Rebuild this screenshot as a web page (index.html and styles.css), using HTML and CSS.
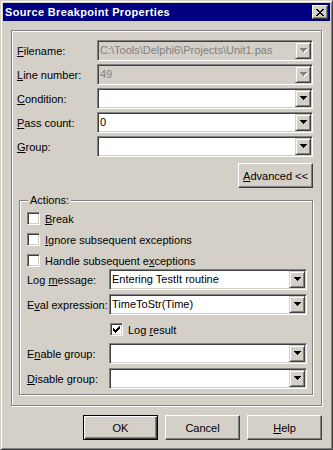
FILE: index.html
```html
<!DOCTYPE html>
<html lang="en">
<head>
    <meta charset="utf-8">
    <title>Source Breakpoint Properties</title>
    <link rel="stylesheet" href="styles.css">
</head>
<body>
    <div class="window">

        <!-- title bar -->
        <div class="titlebar">
            <span class="title">Source Breakpoint Properties</span>
            <span class="close-btn">
                <svg width="8" height="7" viewBox="0 0 8 7" shape-rendering="crispEdges">
                    <rect x="0" y="0" width="2" height="1"/><rect x="6" y="0" width="2" height="1"/>
                    <rect x="1" y="1" width="2" height="1"/><rect x="5" y="1" width="2" height="1"/>
                    <rect x="2" y="2" width="4" height="1"/>
                    <rect x="3" y="3" width="2" height="1"/>
                    <rect x="2" y="4" width="4" height="1"/>
                    <rect x="1" y="5" width="2" height="1"/><rect x="5" y="5" width="2" height="1"/>
                    <rect x="0" y="6" width="2" height="1"/><rect x="6" y="6" width="2" height="1"/>
                </svg>
            </span>
        </div>

        <div class="client">
            <div class="panel">

                <div class="field-row">
                    <span class="lbl"><u>F</u>ilename:</span>
                    <div class="combo disabled">
                        <span class="combo-text">C:\Tools\Delphi6\Projects\Unit1.pas</span>
                        <span class="drop"><svg class="arrow" width="8" height="5" viewBox="0 0 8 5" shape-rendering="crispEdges"><g fill="#fff"><rect x="1" y="1" width="7" height="1"/><rect x="2" y="2" width="5" height="1"/><rect x="3" y="3" width="3" height="1"/><rect x="4" y="4" width="1" height="1"/></g><g fill="#808080"><rect x="0" y="0" width="7" height="1"/><rect x="1" y="1" width="5" height="1"/><rect x="2" y="2" width="3" height="1"/><rect x="3" y="3" width="1" height="1"/></g></svg></span>
                    </div>
                </div>

                <div class="field-row">
                    <span class="lbl"><u>L</u>ine number:</span>
                    <div class="combo disabled">
                        <span class="combo-text">49</span>
                        <span class="drop"><svg class="arrow" width="8" height="5" viewBox="0 0 8 5" shape-rendering="crispEdges"><g fill="#fff"><rect x="1" y="1" width="7" height="1"/><rect x="2" y="2" width="5" height="1"/><rect x="3" y="3" width="3" height="1"/><rect x="4" y="4" width="1" height="1"/></g><g fill="#808080"><rect x="0" y="0" width="7" height="1"/><rect x="1" y="1" width="5" height="1"/><rect x="2" y="2" width="3" height="1"/><rect x="3" y="3" width="1" height="1"/></g></svg></span>
                    </div>
                </div>

                <div class="field-row">
                    <span class="lbl"><u>C</u>ondition:</span>
                    <div class="combo">
                        <span class="combo-text"></span>
                        <span class="drop"><svg class="arrow" width="8" height="5" viewBox="0 0 8 5" shape-rendering="crispEdges"><rect x="0" y="0" width="7" height="1"/><rect x="1" y="1" width="5" height="1"/><rect x="2" y="2" width="3" height="1"/><rect x="3" y="3" width="1" height="1"/></svg></span>
                    </div>
                </div>

                <div class="field-row">
                    <span class="lbl"><u>P</u>ass count:</span>
                    <div class="combo">
                        <span class="combo-text">0</span>
                        <span class="drop"><svg class="arrow" width="8" height="5" viewBox="0 0 8 5" shape-rendering="crispEdges"><rect x="0" y="0" width="7" height="1"/><rect x="1" y="1" width="5" height="1"/><rect x="2" y="2" width="3" height="1"/><rect x="3" y="3" width="1" height="1"/></svg></span>
                    </div>
                </div>

                <div class="field-row">
                    <span class="lbl"><u>G</u>roup:</span>
                    <div class="combo">
                        <span class="combo-text"></span>
                        <span class="drop"><svg class="arrow" width="8" height="5" viewBox="0 0 8 5" shape-rendering="crispEdges"><rect x="0" y="0" width="7" height="1"/><rect x="1" y="1" width="5" height="1"/><rect x="2" y="2" width="3" height="1"/><rect x="3" y="3" width="1" height="1"/></svg></span>
                    </div>
                </div>

                <div class="adv-row">
                    <span class="btn"><u>A</u>dvanced &lt;&lt;</span>
                </div>

                <!-- Actions group -->
                <div class="groupbox">
                    <span class="legend">Actions:</span>

                    <div class="check-row">
                        <span class="check"></span>
                        <span><u>B</u>reak</span>
                    </div>
                    <div class="check-row gap8">
                        <span class="check"></span>
                        <span><u>I</u>gnore subsequent exceptions</span>
                    </div>
                    <div class="check-row gap8">
                        <span class="check"></span>
                        <span>Handle subsequent e<u>x</u>ceptions</span>
                    </div>

                    <div class="sub-row gap2">
                        <span class="sub-lbl">Log <u>m</u>essage:</span>
                        <div class="combo small">
                            <span class="combo-text">Entering TestIt routine</span>
                            <span class="drop"><svg class="arrow" width="8" height="5" viewBox="0 0 8 5" shape-rendering="crispEdges"><rect x="0" y="0" width="7" height="1"/><rect x="1" y="1" width="5" height="1"/><rect x="2" y="2" width="3" height="1"/><rect x="3" y="3" width="1" height="1"/></svg></span>
                        </div>
                    </div>
                    <div class="sub-row gap4">
                        <span class="sub-lbl">E<u>v</u>al expression:</span>
                        <div class="combo small">
                            <span class="combo-text">TimeToStr(Time)</span>
                            <span class="drop"><svg class="arrow" width="8" height="5" viewBox="0 0 8 5" shape-rendering="crispEdges"><rect x="0" y="0" width="7" height="1"/><rect x="1" y="1" width="5" height="1"/><rect x="2" y="2" width="3" height="1"/><rect x="3" y="3" width="1" height="1"/></svg></span>
                        </div>
                    </div>

                    <div class="check-row indent gap8">
                        <span class="check">
                            <svg width="7" height="7" viewBox="0 0 7 7" shape-rendering="crispEdges">
                                <rect x="6" y="0" width="1" height="3"/>
                                <rect x="5" y="1" width="1" height="3"/>
                                <rect x="4" y="2" width="1" height="3"/>
                                <rect x="3" y="3" width="1" height="3"/>
                                <rect x="2" y="4" width="1" height="3"/>
                                <rect x="1" y="3" width="1" height="3"/>
                                <rect x="0" y="2" width="1" height="3"/>
                            </svg>
                        </span>
                        <span>Log <u>r</u>esult</span>
                    </div>

                    <div class="sub-row gap7">
                        <span class="sub-lbl">E<u>n</u>able group:</span>
                        <div class="combo small">
                            <span class="combo-text"></span>
                            <span class="drop"><svg class="arrow" width="8" height="5" viewBox="0 0 8 5" shape-rendering="crispEdges"><rect x="0" y="0" width="7" height="1"/><rect x="1" y="1" width="5" height="1"/><rect x="2" y="2" width="3" height="1"/><rect x="3" y="3" width="1" height="1"/></svg></span>
                        </div>
                    </div>
                    <div class="sub-row gap4">
                        <span class="sub-lbl"><u>D</u>isable group:</span>
                        <div class="combo small">
                            <span class="combo-text"></span>
                            <span class="drop"><svg class="arrow" width="8" height="5" viewBox="0 0 8 5" shape-rendering="crispEdges"><rect x="0" y="0" width="7" height="1"/><rect x="1" y="1" width="5" height="1"/><rect x="2" y="2" width="3" height="1"/><rect x="3" y="3" width="1" height="1"/></svg></span>
                        </div>
                    </div>
                </div>
            </div>

            <!-- bottom buttons -->
            <div class="buttons">
                <span class="btn default">OK</span>
                <span class="btn">Cancel</span>
                <span class="btn"><u>H</u>elp</span>
            </div>
        </div>
    </div>
</body>
</html>
```

FILE: styles.css
```css
/* Windows classic dialog */
body {
    margin: 0;
    background-color: #d4d0c8;
    font-family: "Liberation Sans", Arial, sans-serif;
    font-size: 11px;
    color: #000;
}

u {
    text-underline-offset: 1px;
}

/* window frame */
.window {
    width: 333px;
    height: 450px;
    box-sizing: border-box;
    border: 1px solid;
    border-color: #d4d0c8 #404040 #404040 #d4d0c8;
    box-shadow: inset 1px 1px #fff, inset -1px -1px #808080;
    padding: 2px;
    background-color: #d4d0c8;
    display: flex;
    flex-direction: column;
}

.titlebar {
    height: 18px;
    flex: none;
    background-color: #000080;
    color: #fff;
    display: flex;
    align-items: center;
    padding: 0 2px;
}

.title {
    flex: 1;
    font-weight: bold;
    letter-spacing: 0.35px;
    white-space: nowrap;
}

.close-btn {
    width: 16px;
    height: 14px;
    box-sizing: border-box;
    background-color: #d4d0c8;
    border: 1px solid;
    border-color: #fff #404040 #404040 #fff;
    box-shadow: inset -1px -1px #808080;
    display: flex;
    align-items: center;
    justify-content: center;
}

.client {
    flex: 1;
    padding: 9px 8px 0;
}

/* etched panel */
.panel {
    height: 376px;
    box-sizing: border-box;
    border: 1px solid #808080;
    box-shadow: 1px 1px #fff, inset 1px 1px #fff;
    padding: 9px 8px 0 5px;
}

.field-row {
    display: flex;
    align-items: center;
    height: 21px;
    margin-bottom: 3px;
}

.lbl {
    width: 80px;
    flex: none;
}

/* combo box */
.combo {
    width: 216px;
    height: 21px;
    box-sizing: border-box;
    border: 1px solid;
    border-color: #808080 #fff #fff #808080;
    box-shadow: inset 1px 1px #404040, inset -1px -1px #d4d0c8;
    padding: 1px;
    background-color: #fff;
    display: flex;
}

.combo.small {
    width: 198px;
}

.combo.disabled {
    background-color: #d4d0c8;
    color: #808080;
}

.combo-text {
    flex: 1;
    line-height: 17px;
    padding-left: 1px;
    white-space: nowrap;
    overflow: hidden;
}

.drop {
    width: 16px;
    height: 17px;
    box-sizing: border-box;
    background-color: #d4d0c8;
    border: 1px solid;
    border-color: #d4d0c8 #404040 #404040 #d4d0c8;
    box-shadow: inset 1px 1px #fff, inset -1px -1px #808080;
    display: flex;
    align-items: center;
    justify-content: center;
}

.arrow {
    margin-left: 1px;
}

/* push buttons */
.btn {
    width: 75px;
    height: 25px;
    box-sizing: border-box;
    border: 1px solid;
    border-color: #fff #404040 #404040 #fff;
    box-shadow: inset -1px -1px #808080;
    background-color: #d4d0c8;
    display: flex;
    align-items: center;
    justify-content: center;
}

.btn.default {
    border-color: #000;
    box-shadow: inset 1px 1px #fff, inset -1px -1px #404040, inset -2px -2px #808080;
}

.adv-row {
    display: flex;
    justify-content: flex-end;
    margin-top: 6px;
}

/* Actions group box */
.groupbox {
    position: relative;
    height: 195px;
    box-sizing: border-box;
    margin: 12px 0 0 2px;
    border: 1px solid #808080;
    box-shadow: 1px 1px #fff, inset 1px 1px #fff;
    padding: 11px 5px 0 7px;
}

.legend {
    position: absolute;
    top: -7px;
    left: 8px;
    padding: 0 2px;
    line-height: 13px;
    background-color: #d4d0c8;
}

.check-row {
    display: flex;
    align-items: center;
    height: 13px;
}

.check-row.indent {
    padding-left: 83px;
}

.check {
    width: 13px;
    height: 13px;
    flex: none;
    box-sizing: border-box;
    margin-right: 5px;
    border: 1px solid;
    border-color: #808080 #fff #fff #808080;
    box-shadow: inset 1px 1px #404040, inset -1px -1px #d4d0c8;
    background-color: #fff;
    display: flex;
    align-items: center;
    justify-content: center;
}

.sub-row {
    display: flex;
    align-items: center;
    height: 21px;
}

.sub-lbl {
    width: 82px;
    flex: none;
}

.gap2 { margin-top: 2px; }
.gap4 { margin-top: 4px; }
.gap7 { margin-top: 7px; }
.gap8 { margin-top: 8px; }

.buttons {
    display: flex;
    justify-content: flex-end;
    gap: 7px;
    margin-top: 9px;
}
```
